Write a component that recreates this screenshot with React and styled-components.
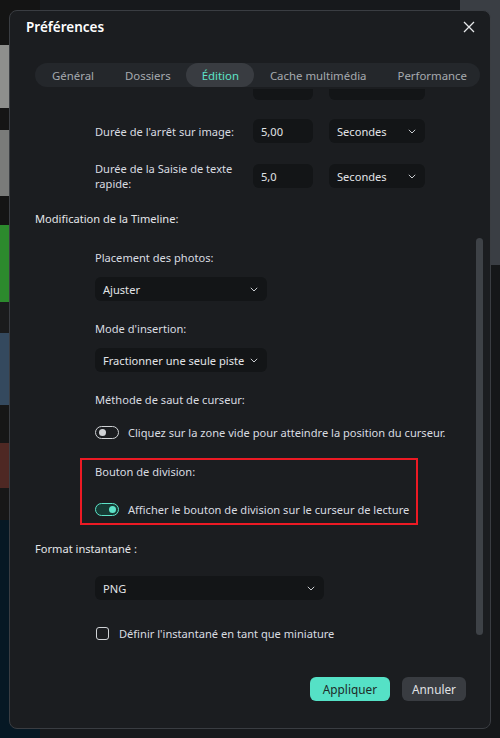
import React from "react";
import styled, { createGlobalStyle } from "styled-components";

const Global = createGlobalStyle`
  html, body { margin: 0; padding: 0; }
  body {
    width: 500px;
    height: 738px;
    overflow: hidden;
    background: #17191c;
    font-family: "Noto Sans", "Open Sans", sans-serif;
  }
`;

const Backdrop = styled.div`
  position: relative;
  width: 500px;
  height: 738px;
  display: flex;
  justify-content: space-between;
  overflow: hidden;
`;

const Strip = styled.div`
  width: 40px;
  display: flex;
  flex-direction: column;
`;

const Block = styled.div`
  height: ${(p) => p.h}px;
  flex: ${(p) => (p.grow ? 1 : "none")};
  background: ${(p) => p.bg};
`;

const Dialog = styled.div`
  position: absolute;
  left: 9px;
  top: 10px;
  width: 480px;
  height: 717px;
  background: #1b1d20;
  border: 1px solid #3a3d42;
  border-radius: 8px;
  display: flex;
  flex-direction: column;
  overflow: hidden;
  color: #d9dce0;
`;

const Header = styled.div`
  display: flex;
  align-items: center;
  justify-content: space-between;
  padding: 0 13px 0 16px;
  height: 32px;
`;

const Title = styled.div`
  font-size: 13.5px;
  font-weight: 600;
  color: #ffffff;
`;

const Close = styled.button`
  border: none;
  background: none;
  padding: 0;
  width: 16px;
  height: 16px;
  display: flex;
  align-items: center;
  justify-content: center;
`;

const TabBar = styled.div`
  margin: 20px 10px 0 25px;
  height: 24px;
  border-radius: 12px;
  background: #24272b;
  display: flex;
  align-items: center;
  padding-left: 1px;
`;

const Tab = styled.div`
  height: 24px;
  padding: 0 15px 0 16px;
  display: flex;
  align-items: center;
  border-radius: 12px;
  font-size: 11.4px;
  color: ${(p) => (p.active ? "#5de3c8" : "#a6aaaf")};
  background: ${(p) => (p.active ? "#393c41" : "transparent")};
  white-space: nowrap;
`;

const Viewport = styled.div`
  position: relative;
  margin-top: 2px;
  height: 570px;
  overflow: hidden;
`;

const Scroller = styled.div`
  margin-top: -13px;
  padding-left: 25px;
  display: flex;
  flex-direction: column;
  font-size: 11.1px;
`;

const Scrollbar = styled.div`
  position: absolute;
  right: 7px;
  top: 149px;
  width: 7px;
  height: 397px;
  border-radius: 4px;
  background: #3e4247;
`;

const Indent = styled.div`
  padding-left: 60px;
  display: flex;
  flex-direction: column;
  align-items: flex-start;
  margin-top: ${(p) => p.mt || 0}px;
`;

const Row = styled.div`
  display: flex;
  align-items: center;
  margin-top: ${(p) => p.mt || 0}px;
`;

const RowLabel = styled.div`
  width: 158px;
  line-height: 15px;
  color: #d9dce0;
`;

const Section = styled.div`
  line-height: 16px;
  color: #e4e6e9;
  margin-top: ${(p) => p.mt || 0}px;
`;

const Label = styled.div`
  line-height: 16px;
  color: #d9dce0;
  margin-top: ${(p) => p.mt || 0}px;
`;

const Field = styled.div`
  height: 24px;
  width: ${(p) => p.w}px;
  box-sizing: border-box;
  background: #131517;
  border-radius: 6px;
  display: flex;
  align-items: center;
  justify-content: space-between;
  padding: 0 9px 0 8px;
  color: #e2e4e7;
  white-space: nowrap;
  margin-left: ${(p) => p.ml || 0}px;
  margin-top: ${(p) => p.mt || 0}px;
  flex: none;
`;

const Check = styled.div`
  display: flex;
  align-items: center;
  gap: ${(p) => p.gap || 9}px;
  height: 16px;
  color: #d9dce0;
  margin-top: ${(p) => p.mt || 0}px;
  white-space: nowrap;
`;

const Switch = styled.div`
  width: 24px;
  height: 13px;
  box-sizing: border-box;
  border-radius: 7px;
  border: 1px solid ${(p) => (p.on ? "#5de3c8" : "#d0d3d6")};
  background: ${(p) => (p.on ? "#163a34" : "transparent")};
  position: relative;
  flex: none;

  &::after {
    content: "";
    position: absolute;
    top: 2px;
    left: ${(p) => (p.on ? "13px" : "3px")};
    width: 7px;
    height: 7px;
    border-radius: 50%;
    background: ${(p) => (p.on ? "#5de3c8" : "#d0d3d6")};
  }
`;

const Box = styled.div`
  width: 13px;
  height: 13px;
  margin-left: 1px;
  box-sizing: border-box;
  border: 1px solid #d0d3d6;
  border-radius: 3px;
  flex: none;
`;

const Highlight = styled.div`
  margin: 18px 0 0 45px;
  width: 338px;
  box-sizing: border-box;
  border: 2px solid #ec1a24;
  padding: 4px 0 6px 13px;
  display: flex;
  flex-direction: column;
`;

const Footer = styled.div`
  display: flex;
  justify-content: flex-end;
  gap: 12px;
  padding: 18px 24px 0 0;
`;

const Button = styled.button`
  height: 24px;
  border: none;
  border-radius: 6px;
  padding: 0 ${(p) => (p.primary ? 13 : 10)}px;
  font-family: inherit;
  font-size: 11.8px;
  background: ${(p) => (p.primary ? "#55e1c6" : "#393c41")};
  color: ${(p) => (p.primary ? "#1e2a28" : "#e0e2e5")};
`;

const Chevron = () => (
  <svg width="8" height="5" viewBox="0 0 8 5">
    <path d="M0.8 0.8 L4 4 L7.2 0.8" fill="none" stroke="#c9ccd0" strokeWidth="1" />
  </svg>
);

const Select = ({ w, children, mt }) => (
  <Field w={w} mt={mt}>
    <span>{children}</span>
    <Chevron />
  </Field>
);

const tabs = ["Général", "Dossiers", "Édition", "Cache multimédia", "Performance"];

export default function App() {
  return (
    <>
      <Global />
      <Backdrop>
        <Strip>
          <Block h={45} bg="#141414" />
          <Block h={63} bg="#8e8f8d" />
          <Block h={22} bg="#151515" />
          <Block h={66} bg="#7a7b7a" />
          <Block h={29} bg="#141414" />
          <Block h={77} bg="#2c8a2d" />
          <Block h={31} bg="#1a1b1c" />
          <Block h={72} bg="#34495e" />
          <Block h={38} bg="#161616" />
          <Block h={45} bg="#4e2823" />
          <Block h={32} bg="#171717" />
          <Block grow bg="#061824" />
        </Strip>
        <Strip>
          <Block h={265} bg="#3a3e44" />
          <Block grow bg="#151719" />
        </Strip>
        <Dialog>
          <Header>
            <Title>Préférences</Title>
            <Close>
              <svg width="12" height="12" viewBox="0 0 12 12">
                <path d="M1 1 L11 11 M11 1 L1 11" stroke="#e6e8ea" strokeWidth="1.3" />
              </svg>
            </Close>
          </Header>
          <TabBar>
            {tabs.map((t) => (
              <Tab key={t} active={t === "Édition"}>
                {t}
              </Tab>
            ))}
          </TabBar>
          <Viewport>
            <Scroller>
              <Indent>
                <Row>
                  <RowLabel />
                  <Field w={60} />
                  <Field w={96} ml={16} />
                </Row>
                <Row mt={19}>
                  <RowLabel>Durée de l'arrêt sur image:</RowLabel>
                  <Field w={60}>5,00</Field>
                  <Field w={96} ml={16}>
                    <span>Secondes</span>
                    <Chevron />
                  </Field>
                </Row>
                <Row mt={18}>
                  <RowLabel>
                    Durée de la Saisie de texte
                    <br />
                    rapide:
                  </RowLabel>
                  <Field w={60}>5,0</Field>
                  <Field w={96} ml={16}>
                    <span>Secondes</span>
                    <Chevron />
                  </Field>
                </Row>
              </Indent>
              <Section mt={20}>Modification de la Timeline:</Section>
              <Indent>
                <Label mt={23}>Placement des photos:</Label>
                <Select w={172} mt={11}>Ajuster</Select>
                <Label mt={20}>Mode d'insertion:</Label>
                <Select w={172} mt={11}>Fractionner une seule piste</Select>
                <Label mt={20}>Méthode de saut de curseur:</Label>
                <Check mt={16}>
                  <Switch />
                  Cliquez sur la zone vide pour atteindre la position du curseur.
                </Check>
              </Indent>
              <Highlight>
                <Label>Bouton de division:</Label>
                <Check mt={21}>
                  <Switch on />
                  Afficher le bouton de division sur le curseur de lecture
                </Check>
              </Highlight>
              <Section mt={16}>Format instantané :</Section>
              <Indent>
                <Select w={229} mt={19}>PNG</Select>
                <Check mt={25} gap={10}>
                  <Box />
                  Définir l'instantané en tant que miniature
                </Check>
              </Indent>
            </Scroller>
            <Scrollbar />
          </Viewport>
          <Footer>
            <Button primary>Appliquer</Button>
            <Button>Annuler</Button>
          </Footer>
        </Dialog>
      </Backdrop>
    </>
  );
}
